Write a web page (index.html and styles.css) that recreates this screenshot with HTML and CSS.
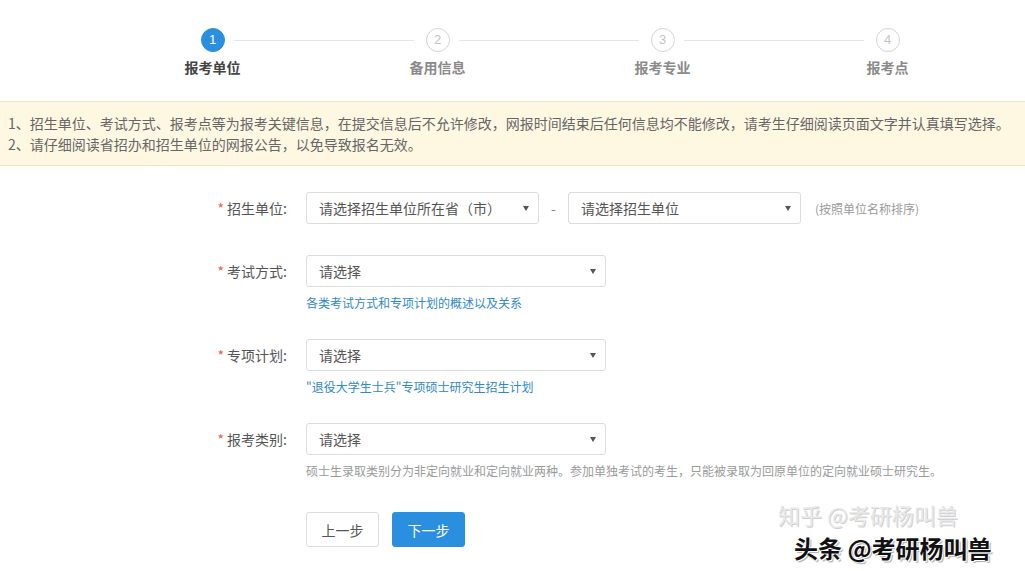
FILE: index.html
```html
<!DOCTYPE html>
<html lang="zh-CN">
<head>
  <meta charset="UTF-8">
  <meta name="viewport" content="width=device-width, initial-scale=1.0">
  <title>报考单位</title>
  <link rel="stylesheet" href="styles.css">
</head>
<body>

  <!-- 步骤条 -->
  <div class="steps">
    <div class="step active">
      <span class="step-num">1</span>
      <span class="step-title">报考单位</span>
    </div>
    <div class="step">
      <span class="step-num">2</span>
      <span class="step-title">备用信息</span>
    </div>
    <div class="step">
      <span class="step-num">3</span>
      <span class="step-title">报考专业</span>
    </div>
    <div class="step">
      <span class="step-num">4</span>
      <span class="step-title">报考点</span>
    </div>
  </div>

  <!-- 提示 -->
  <div class="notice">
    <p>1、招生单位、考试方式、报考点等为报考关键信息，在提交信息后不允许修改，网报时间结束后任何信息均不能修改，请考生仔细阅读页面文字并认真填写选择。</p>
    <p>2、请仔细阅读省招办和招生单位的网报公告，以免导致报名无效。</p>
  </div>

  <!-- 表单 -->
  <form class="form">
    <div class="row row-first">
      <label class="label"><i>*</i>招生单位:</label>
      <div class="select select-half">请选择招生单位所在省（市）</div>
      <span class="dash">-</span>
      <div class="select select-half">请选择招生单位</div>
      <span class="hint">(按照单位名称排序)</span>
    </div>

    <div class="row">
      <label class="label"><i>*</i>考试方式:</label>
      <div class="select">请选择</div>
    </div>
    <a class="help link">各类考试方式和专项计划的概述以及关系</a>

    <div class="row">
      <label class="label"><i>*</i>专项计划:</label>
      <div class="select">请选择</div>
    </div>
    <a class="help link">"退役大学生士兵"专项硕士研究生招生计划</a>

    <div class="row">
      <label class="label"><i>*</i>报考类别:</label>
      <div class="select">请选择</div>
    </div>
    <p class="help grey">硕士生录取类别分为非定向就业和定向就业两种。参加单独考试的考生，只能被录取为回原单位的定向就业硕士研究生。</p>

    <div class="buttons">
      <button type="button" class="btn">上一步</button>
      <button type="button" class="btn btn-primary">下一步</button>
    </div>
  </form>

  <div class="watermark">
    <span class="wm-zhihu">知乎 @考研杨叫兽</span>
    <span class="wm-toutiao">头条 @考研杨叫兽</span>
  </div>

</body>
</html>
```

FILE: styles.css
```css
* {
  margin: 0;
  padding: 0;
  box-sizing: border-box;
}

body {
  font-family: "Noto Sans CJK SC", "Liberation Sans", sans-serif;
  background-color: #fff;
  color: #555;
  width: 1025px;
  height: 571px;
  overflow: hidden;
  position: relative;
}

/* 步骤条 */
.steps {
  display: flex;
  padding: 28px 0 0 100px;
  margin-bottom: 25px;
}

.step {
  position: relative;
  width: 225px;
  display: flex;
  flex-direction: column;
  align-items: center;
}

.step::after {
  content: "";
  position: absolute;
  top: 12px;
  left: calc(50% + 21px);
  width: 180px;
  height: 1px;
  background-color: #e6e6e6;
}

.step:last-child::after {
  display: none;
}

.step-num {
  width: 24px;
  height: 24px;
  border-radius: 50%;
  border: 1px solid #d4d4d4;
  color: #c4c4c4;
  font-family: "Liberation Sans", sans-serif;
  font-size: 13px;
  line-height: 22px;
  text-align: center;
  background-color: #fff;
}

.step-title {
  margin-top: 6px;
  font-size: 14px;
  line-height: 18px;
  font-weight: bold;
  color: #8a8a8a;
}

.step.active .step-num {
  background-color: #2b8fe0;
  border-color: #2b8fe0;
  color: #fff;
}

.step.active .step-title {
  color: #444;
}

/* 提示 */
.notice {
  background-color: #fef8e3;
  border-top: 1px solid #f3e6bf;
  border-bottom: 1px solid #f3e6bf;
  padding: 11px 8px 10px;
  font-size: 14px;
  line-height: 21px;
  color: #666;
}

/* 表单 */
.form {
  padding: 26px 0 0 190px;
}

.row {
  display: flex;
  align-items: center;
  height: 32px;
}

.row-first {
  margin-bottom: 31px;
}

.label {
  width: 116px;
  padding-right: 19px;
  text-align: right;
  font-size: 14px;
  color: #555;
}

.label i {
  font-style: normal;
  color: #e8603c;
  margin-right: 3px;
}

.select {
  position: relative;
  width: 300px;
  height: 32px;
  border: 1px solid #dcdcdc;
  border-radius: 3px;
  padding-left: 12px;
  font-size: 14px;
  line-height: 30px;
  color: #555;
  background-color: #fff;
}

.select::after {
  content: "";
  position: absolute;
  right: 9px;
  top: 13px;
  border-left: 3px solid transparent;
  border-right: 3px solid transparent;
  border-top: 5px solid #555;
}

.select-half {
  width: 233px;
}

.dash {
  width: 29px;
  text-align: center;
  font-size: 14px;
  color: #888;
}

.hint {
  margin-left: 14px;
  font-size: 12px;
  color: #9a9a9a;
}

.help {
  display: block;
  margin: 8px 0 28px 116px;
  font-size: 12px;
  line-height: 16px;
}

.link {
  color: #2f89c4;
}

.grey {
  color: #9a9a9a;
  margin-bottom: 33px;
}

.buttons {
  display: flex;
  gap: 13px;
  padding-left: 116px;
}

.btn {
  width: 73px;
  height: 35px;
  border: 1px solid #dcdcdc;
  border-radius: 3px;
  background-color: #fff;
  color: #555;
  font-family: "Noto Sans CJK SC", sans-serif;
  font-size: 14px;
  cursor: pointer;
}

.btn-primary {
  background-color: #2b8fe0;
  border-color: #2b8fe0;
  color: #fff;
}

/* 水印 */
.watermark {
  position: absolute;
  left: 778px;
  top: 500px;
  width: 240px;
  height: 70px;
  pointer-events: none;
}

.wm-zhihu {
  position: absolute;
  left: 0;
  top: 0;
  font-size: 22px;
  line-height: 28px;
  white-space: nowrap;
  color: #e8e8e8;
  text-shadow: 1px 1px 0 #d0d0d0;
}

.wm-toutiao {
  position: absolute;
  left: 16px;
  top: 33px;
  font-size: 24px;
  line-height: 30px;
  font-weight: bold;
  white-space: nowrap;
  color: #111;
  text-shadow: 1px 1px 0 #fff, -1px -1px 0 #fff, 2px 2px 1px #aaa;
}
```
